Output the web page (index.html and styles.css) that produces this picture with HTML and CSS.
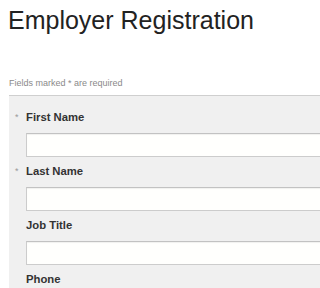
FILE: index.html
```html
<!DOCTYPE html>
<html>
<head>
<meta charset="utf-8">
<link rel="stylesheet" href="styles.css">
</head>
<body>
<div class="page">
  <h1 class="title">Employer Registration</h1>
  <p class="note">Fields marked * are required</p>
  <form class="panel">
    <div class="field">
      <label class="label"><span class="req">*</span>First Name</label>
      <input class="input" type="text">
    </div>
    <div class="field">
      <label class="label"><span class="req">*</span>Last Name</label>
      <input class="input" type="text">
    </div>
    <div class="field">
      <label class="label">Job Title</label>
      <input class="input" type="text">
    </div>
    <div class="field">
      <label class="label">Phone</label>
      <input class="input" type="text">
    </div>
  </form>
</div>
</body>
</html>
```
FILE: styles.css
```css
html, body {
  margin: 0;
  padding: 0;
  height: 100%;
  overflow: hidden;
  background: #ffffff;
}
.page {
  box-sizing: border-box;
  height: 100%;
  overflow: hidden;
  padding: 6px 0 0 9px;
  font-family: "Liberation Sans", Arial, sans-serif;
}
.title {
  margin: 0 0 0 -1px;
  font-size: 25px;
  line-height: 28px;
  font-weight: normal;
  color: #222222;
  white-space: nowrap;
}
.note {
  margin: 44px 0 6px 0;
  font-size: 9px;
  line-height: 11px;
  color: #8a8a8a;
}
.panel {
  margin: 0;
  border-top: 1px solid #cfcfcf;
  background: #f0f0f0;
  padding: 14px 0 0 17px;
  overflow: hidden;
}
.field {
  display: flex;
  flex-direction: column;
  align-items: flex-start;
  margin-bottom: 7px;
}
.label {
  display: block;
  font-size: 11.3px;
  line-height: 14px;
  font-weight: bold;
  color: #333333;
  margin-bottom: 9px;
}
.req {
  display: inline-block;
  width: 11px;
  margin-left: -11px;
  font-size: 9px;
  font-weight: normal;
  color: #9a9a9a;
  vertical-align: top;
  line-height: 14px;
}
.input {
  box-sizing: border-box;
  width: calc(100% + 20px);
  flex-shrink: 0;
  height: 24px;
  margin: 0;
  background: #fffffd;
  border: 1px solid #cccccc;
  border-top-color: #c2c2c2;
  box-shadow: inset 0 1px 1px rgba(0, 0, 0, 0.06);
  border-radius: 0;
  padding: 0 4px;
}
```
